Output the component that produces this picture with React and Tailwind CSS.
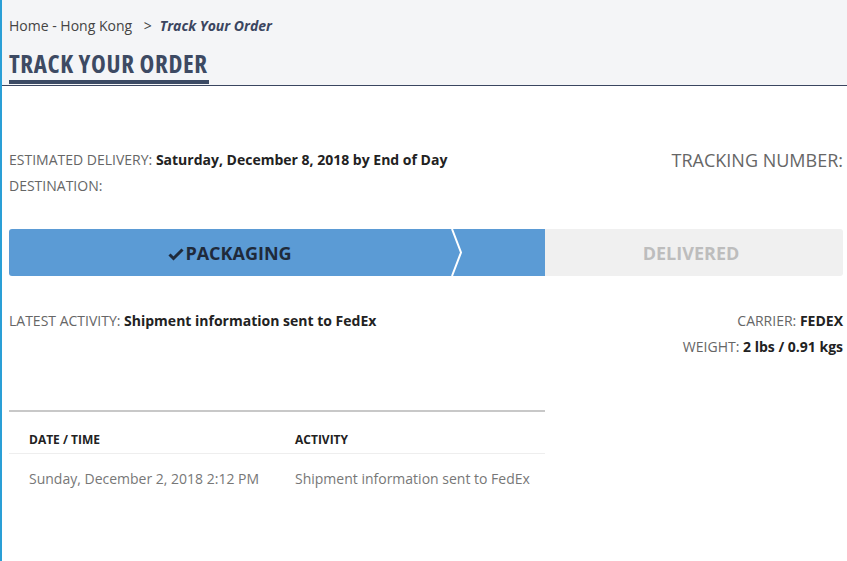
export default function App() {
  return (
    <div className="min-h-[561px] w-[847px] border-l-2 border-[#2a9fd6] bg-white font-['Open_Sans',sans-serif] text-[14px]">
      {/* Header */}
      <div className="h-[86px] border-b border-[#3a4660] bg-[#f4f5f7] pl-[7px]">
        <div className="pt-[16px] leading-[20px] text-[#444]">
          Home - Hong Kong <span className="mx-[8px]">&gt;</span>
          <span className="font-bold italic text-[#3b4560]">Track Your Order</span>
        </div>
        <div className="mt-[12px] inline-block border-b-[4px] border-[#3b4a63] pb-[2px] pr-[1px]">
          <h1 className="font-['Open_Sans',sans-serif] text-[25px] font-bold leading-[30px] tracking-[0.6px] text-[#3d4a63] [font-stretch:75%]">
            TRACK YOUR ORDER
          </h1>
        </div>
      </div>

      <div className="px-[7px] pr-[4px]">
        {/* Delivery info */}
        <div className="mt-[61px] flex justify-between">
          <div className="leading-[26px]">
            <div>
              <span className="text-[#666]">ESTIMATED DELIVERY: </span>
              <span className="font-bold text-[#222]">Saturday, December 8, 2018 by End of Day</span>
            </div>
            <div className="text-[#666]">DESTINATION:</div>
          </div>
          <div className="text-[18px] leading-[26px] text-[#666]">TRACKING NUMBER:</div>
        </div>

        {/* Progress bar */}
        <div className="mt-[30px] flex h-[47px]">
          <div className="flex w-[536px] rounded-l-[3px] bg-[#5b9bd5]">
            <div className="flex w-[442px] items-center justify-center pt-[2px] text-[18px] font-bold text-[#1f2a3a]">
              <svg width="16" height="14" viewBox="0 0 16 14" className="mr-[1px]">
                <path d="M1.5 7.5 L5.5 11.5 L14.5 2.5" fill="none" stroke="#1f2a3a" strokeWidth="3" />
              </svg>
              PACKAGING
            </div>
            <svg width="12" height="47" viewBox="0 0 12 47">
              <polyline points="1,0 10,23.5 1,47" fill="none" stroke="#fff" strokeWidth="2" />
            </svg>
            <div className="flex-1" />
          </div>
          <div className="flex flex-1 items-center justify-center rounded-r-[3px] bg-[#f0f0f0] pr-[6px] pt-[2px] text-[18px] font-bold text-[#bdbdbd]">
            DELIVERED
          </div>
        </div>

        {/* Activity */}
        <div className="mt-[32px] flex justify-between leading-[26px]">
          <div>
            <span className="text-[#666]">LATEST ACTIVITY: </span>
            <span className="font-bold text-[#222]">Shipment information sent to FedEx</span>
          </div>
          <div className="text-right">
            <div>
              <span className="text-[#666]">CARRIER: </span>
              <span className="font-bold text-[#222]">FEDEX</span>
            </div>
            <div>
              <span className="text-[#666]">WEIGHT: </span>
              <span className="font-bold text-[#222]">2 lbs / 0.91 kgs</span>
            </div>
          </div>
        </div>

        {/* Table */}
        <table className="mt-[50px] w-[536px] border-t-2 border-[#c8c8c8] text-left">
          <thead>
            <tr className="border-b border-[#eee]">
              <th className="h-[42px] pl-[20px] pt-[15px] text-[12px] font-bold text-[#222]">DATE / TIME</th>
              <th className="pl-[6px] pt-[15px] text-[12px] font-bold text-[#222]">ACTIVITY</th>
            </tr>
          </thead>
          <tbody>
            <tr>
              <td className="w-[280px] pl-[20px] pt-[14px] text-[#777]">Sunday, December 2, 2018 2:12 PM</td>
              <td className="pl-[6px] pt-[14px] text-[#777]">Shipment information sent to FedEx</td>
            </tr>
          </tbody>
        </table>
      </div>
    </div>
  );
}
